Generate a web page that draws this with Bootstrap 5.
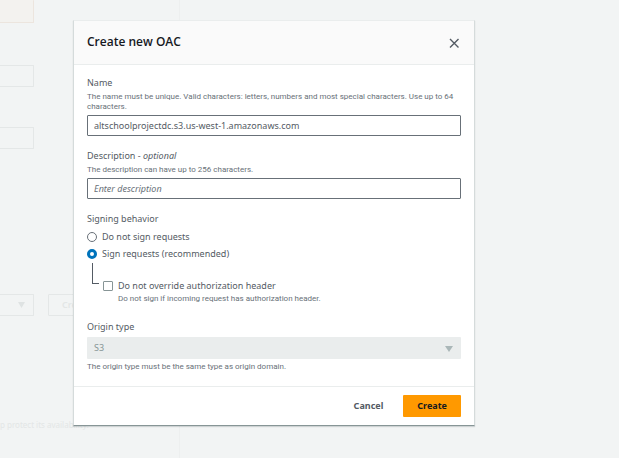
<!DOCTYPE html>
<html lang="en">
<head>
<meta charset="utf-8">
<meta name="viewport" content="width=device-width, initial-scale=1">
<title>Create new OAC</title>
<link href="https://cdn.jsdelivr.net/npm/bootstrap@5.3.0/dist/css/bootstrap.min.css" rel="stylesheet">
<style>
body { background: #f2f4f4; color: #545b64; font: 9px/12px "Noto Sans", "Open Sans", sans-serif; }
.page { color: #e3e6e6; }
.page-main { width: 180px; border-right: 1px solid #edefef; }
.ghost { border: 1px solid #e4e7e7; border-left: 0; width: 34px; height: 22px; border-radius: 0 1px 1px 0; }
.ghost-alert { height: 23px; background: #f3f2ef; border-color: #ece5de; border-top: 0; margin-bottom: 42px; }
.ghost-field { margin-bottom: 40px; }
.ghost-gap { margin-top: 145px; }
.ghost-btn { border: 1px solid #e4e7e7; border-radius: 1px; background: transparent; color: #e3e6e6; font-weight: 600; padding: 0 13px; height: 22px; margin-left: 14px; }
.ghost-note { font-size: 8px; margin-top: 103px; }
.overlay { padding: 20px 144px 20px 73px; }
.dialog { background: #fff; border: 1px solid #d5dbdb; border-top-color: #eaeded; border-bottom-color: #879596; box-shadow: 0 1px 1px rgba(0,28,36,.15); }
.dialog-head { background: #fafafa; border-bottom: 1px solid #eaeded; height: 44px; padding: 0 13px; }
.dialog-head h1 { font: 600 12px/16px "Open Sans", "Noto Sans", sans-serif; color: #16191f; padding-bottom: 2px; }
.close-btn { width: 12px; height: 12px; line-height: 0; }
.dialog-body { padding: 11px 13px 14px; }
.dialog-foot { border-top: 1px solid #eaeded; padding: 8px 13px; gap: 6px; }
.field { margin-bottom: 13px; }
.help { font: 8px/10px Roboto, "Noto Sans", sans-serif; color: #687078; }
.name-line { display: block; font-size: 9px; line-height: 14px; margin-bottom: 2px; }
.box { border: 1px solid #687078; border-radius: 1px; height: 21px; padding: 0 6px; font: inherit; color: #545b64; width: 100%; background: #fff; }
.box::placeholder { color: #687078; font-style: italic; opacity: 1; }
.help + .box { margin-top: 3px; }
.tick { appearance: none; width: 10px; height: 10px; margin: 0; border: 1px solid #687078; background: #fff; flex: none; }
.tick[type=radio] { border-radius: 50%; }
.tick[type=radio]:checked { border: 3px solid #0073bb; }
.tick[type=checkbox] { border-radius: 1px; border-color: #879596; }
.choice { gap: 5px; height: 17px; }
.branch { width: 7px; height: 21px; border: solid #545b64; border-width: 0 0 1px 1px; margin: 1px 4px 0 5px; }
.sub { padding-top: 15px; margin-bottom: 16px; }
.sub .help { padding-left: 15px; }
.origin { appearance: none; border: 0; background: #eaeded; color: #879596; opacity: 1; height: 22px; padding-left: 7px; }
.origin-label { margin-bottom: 3px; }
.origin-help { margin-top: 3px; }
.caret { position: absolute; right: 8px; top: 9px; }
.act { font-weight: 700; border: 0; border-radius: 1px; height: 22px; padding: 0 14px; background: transparent; color: #545b64; }
.act-main { background: #ff9900; color: #16191f; }
</style>
<script src="https://cdn.jsdelivr.net/npm/bootstrap@5.3.0/dist/js/bootstrap.bundle.min.js"></script>
</head>
<body>
<div class="page" aria-hidden="true">
  <div class="page-main min-vh-100">
    <div class="ghost ghost-alert"></div>
    <div class="ghost ghost-field"></div>
    <div class="ghost"></div>
    <div class="d-flex ghost-gap">
      <div class="ghost d-flex align-items-center justify-content-end pe-2 flex-shrink-0"><svg width="7" height="6" viewBox="0 0 7 6"><path d="M0 0h7L3.500 6z" fill="#dfe3e3"/></svg></div>
      <button class="ghost-btn" type="button" tabindex="-1">Create</button>
    </div>
    <div class="ghost-note text-nowrap">p protect its availability.</div>
  </div>
</div>
<div class="overlay position-absolute top-0 start-0 w-100">
  <form class="dialog" role="dialog" aria-labelledby="title">
    <header class="dialog-head d-flex align-items-center justify-content-between">
      <h1 id="title" class="m-0">Create new OAC</h1>
      <button type="button" class="close-btn border-0 bg-transparent p-0" aria-label="Close"><svg width="12" height="12" viewBox="0 0 12 12"><path d="M1 2l8.500 8.500M9.500 2L1 10.500" stroke="#545b64" stroke-width="1.400"/></svg></button>
    </header>
    <div class="dialog-body">
      <div class="field">
        <label class="name-line" for="name">Name</label>
        <div class="help">The name must be unique. Valid characters: letters, numbers and most special characters. Use up to 64 characters.</div>
        <input id="name" class="box d-block" type="text" value="altschoolprojectdc.s3.us-west-1.amazonaws.com">
      </div>
      <div class="field">
        <label class="name-line" for="desc">Description - <em>optional</em></label>
        <div class="help">The description can have up to 256 characters.</div>
        <input id="desc" class="box d-block" type="text" placeholder="Enter description">
      </div>
      <fieldset>
        <legend class="name-line float-none">Signing behavior</legend>
        <div class="choice d-flex align-items-center"><input class="tick" type="radio" name="sign" id="s1"><label for="s1">Do not sign requests</label></div>
        <div class="choice d-flex align-items-center"><input class="tick" type="radio" name="sign" id="s2" checked><label for="s2">Sign requests (recommended)</label></div>
        <div class="d-flex">
          <div class="branch"></div>
          <div class="sub">
            <div class="choice d-flex align-items-center"><input class="tick" type="checkbox" id="c1"><label for="c1">Do not override authorization header</label></div>
            <div class="help">Do not sign if incoming request has authorization header.</div>
          </div>
        </div>
      </fieldset>
      <div>
        <label class="name-line origin-label" for="origin">Origin type</label>
        <div class="position-relative">
          <select id="origin" class="box origin d-block" disabled><option>S3</option></select>
          <svg class="caret" width="8" height="6" viewBox="0 0 8 6"><path d="M0 0h8L4 6z" fill="#aab7b8"/></svg>
        </div>
        <div class="help origin-help">The origin type must be the same type as origin domain.</div>
      </div>
    </div>
    <footer class="dialog-foot d-flex justify-content-end">
      <button type="button" class="act">Cancel</button>
      <button type="submit" class="act act-main">Create</button>
    </footer>
  </form>
</div>
</body>
</html>
